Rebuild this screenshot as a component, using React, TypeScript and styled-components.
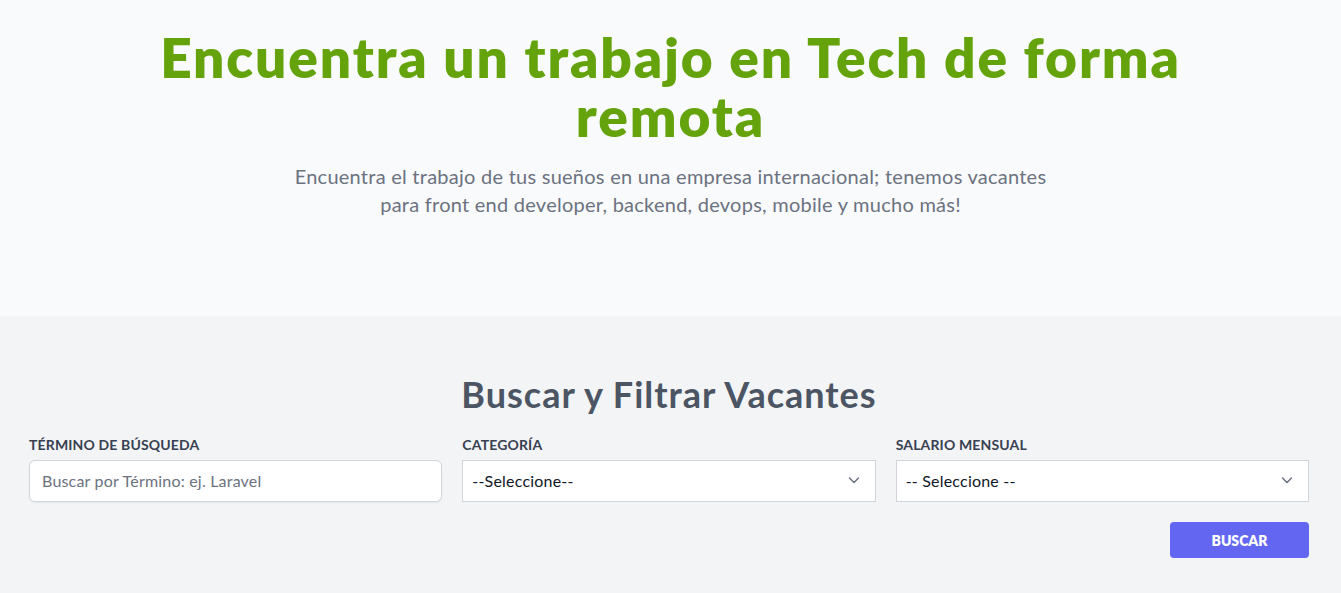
import React from "react";
import styled, { createGlobalStyle } from "styled-components";

const Global = createGlobalStyle`
  * { box-sizing: border-box; }
  body {
    margin: 0;
    font-family: "Lato", "Noto Sans", sans-serif;
    background: #f3f4f6;
  }
`;

const Hero = styled.section`
  background: #f9fafb;
  height: 316px;
  padding-top: 28px;
  display: flex;
  flex-direction: column;
  align-items: center;
`;

const Title = styled.h1`
  margin: 0;
  max-width: 1060px;
  text-align: center;
  color: #65a30d;
  font-size: 55px;
  line-height: 59px;
  font-weight: 800;
  letter-spacing: 1.9px;
`;

const Lead = styled.p`
  margin: 16px 0 0;
  max-width: 768px;
  text-align: center;
  color: #6b7280;
  font-size: 20px;
  line-height: 28px;
  letter-spacing: 0.25px;
`;

const Search = styled.section`
  padding: 56px 0 40px;
`;

const Container = styled.div`
  width: 1280px;
  margin-left: 29px;
`;

const SubTitle = styled.h2`
  margin: 0 0 19px;
  text-align: center;
  color: #4b5563;
  font-size: 36px;
  line-height: 44px;
  font-weight: 700;
  letter-spacing: 1px;
`;

const Grid = styled.div`
  display: grid;
  grid-template-columns: repeat(3, 1fr);
  gap: 20px;
`;

const Field = styled.div`
  display: flex;
  flex-direction: column;
`;

const Label = styled.label`
  font-size: 14px;
  line-height: 20px;
  font-weight: 700;
  text-transform: uppercase;
  color: #374151;
  margin-bottom: 5px;
  letter-spacing: 0.15px;
`;

const TextInput = styled.input`
  height: 42px;
  border: 1px solid #d1d5db;
  border-radius: 6px;
  box-shadow: 0 1px 2px rgba(0, 0, 0, 0.06);
  padding: 0 12px 2px;
  font-family: inherit;
  font-size: 16px;
  letter-spacing: 0.2px;
  color: #111827;
  background: #fff;
  &::placeholder { color: #6b7280; }
`;

const SelectBox = styled.div`
  height: 42px;
  border: 1px solid #d1d5db;
  background: #fff;
  display: flex;
  align-items: center;
  justify-content: space-between;
  padding: 0 14px 2px 9px;
  font-size: 16px;
  letter-spacing: 0.2px;
  color: #111827;
`;

const Actions = styled.div`
  display: flex;
  justify-content: flex-end;
  margin-top: 20px;
`;

const Button = styled.button`
  width: 139px;
  height: 36px;
  border: 0;
  border-radius: 4px;
  background: #6366f1;
  color: #fff;
  font-family: inherit;
  font-weight: 800;
  font-size: 14px;
  text-transform: uppercase;
`;

const Chevron = () => (
  <svg width="14" height="14" viewBox="0 0 14 14" fill="none">
    <path d="M2.5 5l4.5 4.5L11.5 5" stroke="#6b7280" strokeWidth="1.5" strokeLinecap="round" strokeLinejoin="round" />
  </svg>
);

export default function App() {
  return (
    <>
      <Global />
      <Hero>
        <Title>Encuentra un trabajo en Tech de forma remota</Title>
        <Lead>
          Encuentra el trabajo de tus sueños en una empresa internacional; tenemos vacantes para front end developer, backend, devops, mobile y mucho más!
        </Lead>
      </Hero>
      <Search>
        <Container>
          <SubTitle>Buscar y Filtrar Vacantes</SubTitle>
          <Grid>
            <Field>
              <Label>Término de Búsqueda</Label>
              <TextInput placeholder="Buscar por Término: ej. Laravel" />
            </Field>
            <Field>
              <Label>Categoría</Label>
              <SelectBox>
                <span>--Seleccione--</span>
                <Chevron />
              </SelectBox>
            </Field>
            <Field>
              <Label>Salario Mensual</Label>
              <SelectBox>
                <span>-- Seleccione --</span>
                <Chevron />
              </SelectBox>
            </Field>
          </Grid>
          <Actions>
            <Button>Buscar</Button>
          </Actions>
        </Container>
      </Search>
    </>
  );
}
